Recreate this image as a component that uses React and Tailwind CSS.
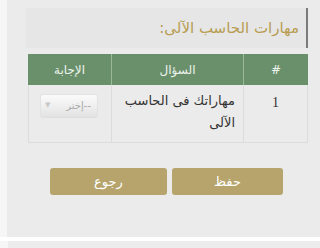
export default function App() {
  const font = { fontFamily: '"DejaVu Sans", sans-serif' };

  return (
    <div
      className="w-[320px] h-[248px] overflow-hidden bg-[#f6f6f6] flex flex-col"
      style={font}
    >
      {/* main panel */}
      <div dir="rtl" className="ml-[7px] h-[237px] shrink-0 bg-[#ebebeb] pt-[8px]">
        {/* title */}
        <div className="mr-[12px] ml-[19px] h-[40px] bg-[#e6e6e6] border-r-2 border-[#7b7b7b] flex items-center pr-[7px]">
          <span className="text-[15px] text-[#b89d52]">مهارات الحاسب الآلى:</span>
        </div>

        {/* table */}
        <div className="mr-[12px] ml-[21px] mt-[6px] w-[280px]">
          <div className="flex h-[31px] bg-[#6a906b] text-[#eef4ee] text-[12px]">
            <div className="w-[65px] flex items-center justify-center border-l border-[#9ab89a]">#</div>
            <div className="w-[132px] flex items-center justify-center border-l border-[#9ab89a]">السؤال</div>
            <div className="flex-1 flex items-center justify-center">الإجابة</div>
          </div>
          <div className="flex h-[58px] border border-t-0 border-[#dcdcdc] text-[#333]">
            <div
              className="w-[64px] border-l border-[#dcdcdc] flex justify-center pt-[7px] text-[14px]"
              style={{ fontFamily: '"Liberation Serif", serif' }}
            >
              1
            </div>
            <div className="w-[132px] border-l border-[#dcdcdc] pr-[8px] pt-[5px] text-[13px] leading-[22px] text-right">
              مهاراتك فى الحاسب
              <br />
              الآلى
            </div>
            <div className="flex-1 pr-[13px] pt-[9px]">
              <div className="w-[58px] h-[23px] rounded-[3px] border border-[#e2e2e2] bg-gradient-to-b from-[#fbfbfb] to-[#e4e4e4] flex items-center justify-between px-[4px] shadow-[0_1px_1px_rgba(0,0,0,0.06)]">
                <span className="text-[10px] text-[#a9a9a9] pr-[2px]">--إختر</span>
                <span className="text-[7px] text-[#c8c8c8]">▼</span>
              </div>
            </div>
          </div>
        </div>

        {/* buttons */}
        <div className="mt-[25px] flex gap-[5px] pr-[37px]">
          <button className="w-[111px] h-[27px] rounded-[3px] bg-[#b6a46c] text-white text-[13px]">حفظ</button>
          <button className="w-[117px] h-[27px] rounded-[3px] bg-[#b6a46c] text-white text-[13px]">رجوع</button>
        </div>
      </div>

      <div className="h-[4px] shrink-0 bg-white" />
      <div className="ml-[8px] flex-1 bg-[#ececec]" />
    </div>
  );
}
